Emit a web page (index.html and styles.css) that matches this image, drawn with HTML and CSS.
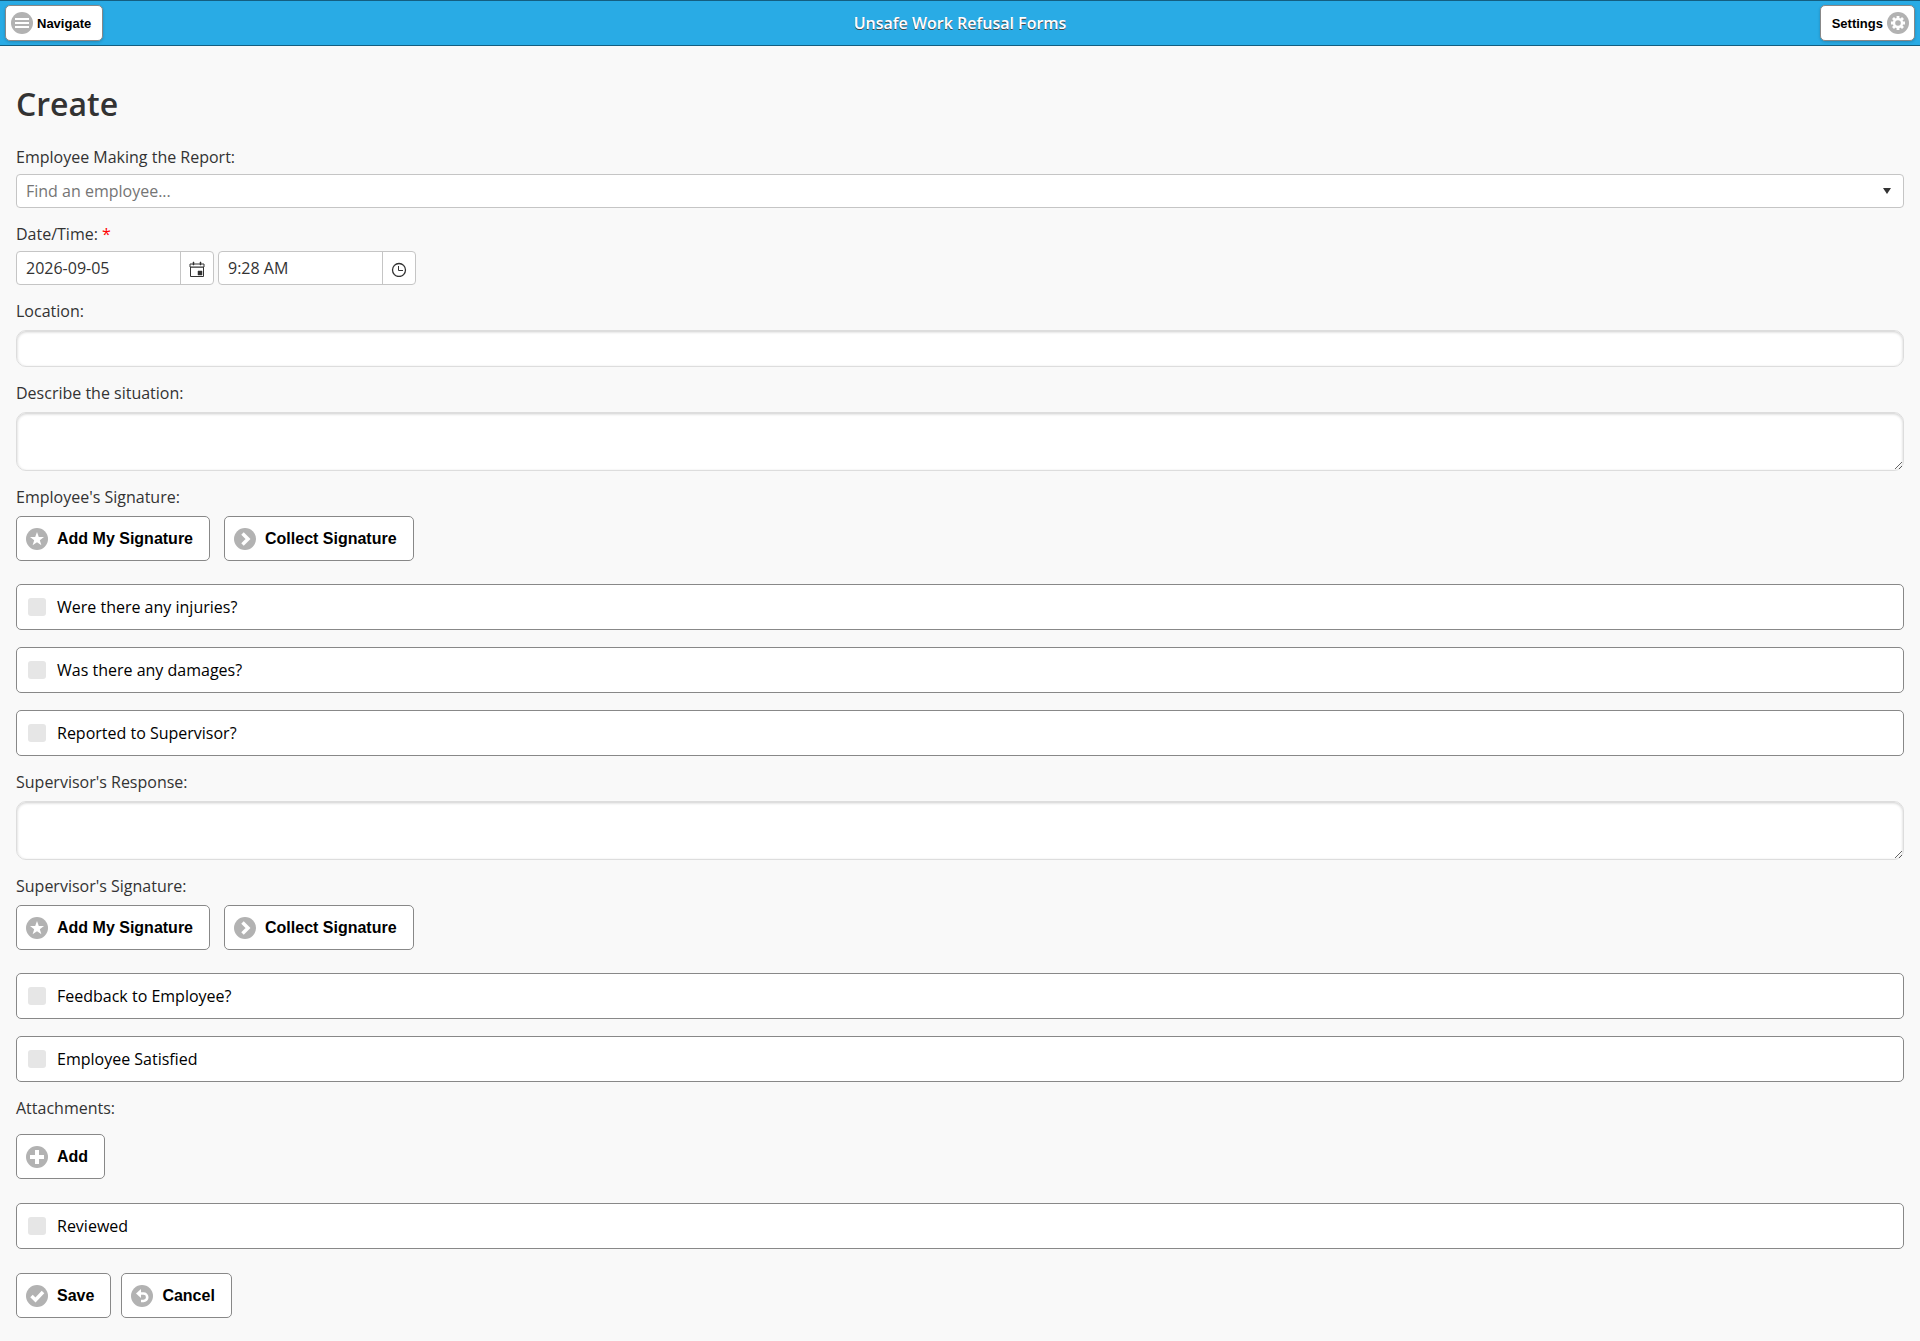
FILE: index.html
```html
<!DOCTYPE html>
<html lang="en">
  <head>
    <meta charset="UTF-8" />
    <meta name="viewport" content="width=device-width, initial-scale=1.0" />
    <title>Unsafe Work Refusal Forms</title>
    <link rel="stylesheet" href="styles.css">
  </head>
  <body>
    <!-- shared icons -->
    <svg class="sprite" aria-hidden="true">
      <symbol id="icon-bars" viewBox="0 0 22 22">
        <circle cx="11" cy="11" r="11" fill="#b2b2b2" />
        <path d="M4 7h14M4 11h14M4 15h14" stroke="#fff" stroke-width="2" />
      </symbol>
      <symbol id="icon-gear" viewBox="0 0 22 22">
        <circle cx="11" cy="11" r="11" fill="#b2b2b2" />
        <path d="M11 4v14M4 11h14M6 6l10 10M16 6L6 16" stroke="#fff" stroke-width="2.800" />
        <circle cx="11" cy="11" r="5.200" fill="#fff" />
        <circle cx="11" cy="11" r="2.800" fill="#b2b2b2" />
      </symbol>
      <symbol id="icon-star" viewBox="0 0 22 22">
        <circle cx="11" cy="11" r="11" fill="#b2b2b2" />
        <path d="M11 4l1.800 5H18l-4.200 3.200 1.600 5L11 14.200l-4.400 3 1.600-5L4 9h5.200z" fill="#fff" />
      </symbol>
      <symbol id="icon-arrow" viewBox="0 0 22 22">
        <circle cx="11" cy="11" r="11" fill="#b2b2b2" />
        <path d="M8.500 5.500L14 11l-5.500 5.500" fill="none" stroke="#fff" stroke-width="3.500" />
      </symbol>
      <symbol id="icon-plus" viewBox="0 0 22 22">
        <circle cx="11" cy="11" r="11" fill="#b2b2b2" />
        <path d="M11 4v14M4 11h14" stroke="#fff" stroke-width="4" />
      </symbol>
      <symbol id="icon-check" viewBox="0 0 22 22">
        <circle cx="11" cy="11" r="11" fill="#b2b2b2" />
        <path d="M5.500 11l4 4 7.500-8" fill="none" stroke="#fff" stroke-width="3.500" />
      </symbol>
      <symbol id="icon-back" viewBox="0 0 22 22">
        <circle cx="11" cy="11" r="11" fill="#b2b2b2" />
        <path d="M8 8.500h4.500a3.600 3.600 0 0 1 0 7.500H10" fill="none" stroke="#fff" stroke-width="2.600" />
        <path d="M5 8.500l5-4.500v9z" fill="#fff" />
      </symbol>
      <symbol id="icon-calendar" viewBox="0 0 16 16">
        <path d="M1.500 3.500h13v12h-13zM1.500 6h13M4.500 1v3M11.500 1v3" fill="none" stroke="#333" />
        <path d="M1 3h14v3H1z" fill="#fff" stroke="#333" />
        <path d="M4 1h1v3H4zM11 1h1v3h-1zM9 10h4v4H9z" fill="#333" stroke="#333" stroke-width=".5" />
      </symbol>
      <symbol id="icon-clock" viewBox="0 0 16 16">
        <circle cx="8" cy="9" r="6.500" fill="none" stroke="#333" stroke-width="1.300" />
        <path d="M7.500 5v4.500H12" fill="none" stroke="#333" />
      </symbol>
    </svg>

    <header class="header">
      <button type="button" class="nav-btn">
        <svg class="icon"><use href="#icon-bars" /></svg>Navigate
      </button>
      <div class="title">Unsafe Work Refusal Forms</div>
      <button type="button" class="nav-btn nav-btn-right">
        Settings<svg class="icon"><use href="#icon-gear" /></svg>
      </button>
    </header>

    <main class="content">
      <h1>Create</h1>
      <form>
        <div class="field field-picker">
          <label for="employee">Employee Making the Report:</label>
          <div class="picker">
            <input type="text" id="employee" placeholder="Find an employee..." autocomplete="off" />
            <button type="button" class="picker-arrow" aria-label="Show employees">
              <svg width="8" height="6"><path d="M0 0h8L4 6z" fill="#333" /></svg>
            </button>
          </div>
        </div>

        <div class="field field-picker">
          <label for="date">Date/Time: <span class="required">*</span></label>
          <div class="date-time">
            <div class="picker picker-small">
              <input type="text" id="date" value="2026-09-05" />
              <button type="button" class="picker-btn" aria-label="Open calendar">
                <svg width="16" height="16"><use href="#icon-calendar" /></svg>
              </button>
            </div>
            <div class="picker picker-small">
              <input type="text" id="time" value="9:28 AM" aria-label="Time" />
              <button type="button" class="picker-btn" aria-label="Open time list">
                <svg width="16" height="16"><use href="#icon-clock" /></svg>
              </button>
            </div>
          </div>
        </div>

        <div class="field">
          <label for="location">Location:</label>
          <input type="text" id="location" class="text-input" />
        </div>

        <div class="field">
          <label for="situation">Describe the situation:</label>
          <textarea id="situation" class="text-input"></textarea>
        </div>

        <div class="field">
          <span class="label">Employee's Signature:</span>
          <div class="buttons signature">
            <button type="button" class="btn"><svg class="icon"><use href="#icon-star" /></svg>Add My Signature</button>
            <button type="button" class="btn"><svg class="icon"><use href="#icon-arrow" /></svg>Collect Signature</button>
          </div>
        </div>

        <div class="checks">
          <label class="check"><input type="checkbox" />Were there any injuries?</label>
          <label class="check"><input type="checkbox" />Was there any damages?</label>
          <label class="check"><input type="checkbox" />Reported to Supervisor?</label>
        </div>

        <div class="field">
          <label for="response">Supervisor's Response:</label>
          <textarea id="response" class="text-input"></textarea>
        </div>

        <div class="field">
          <span class="label">Supervisor's Signature:</span>
          <div class="buttons signature">
            <button type="button" class="btn"><svg class="icon"><use href="#icon-star" /></svg>Add My Signature</button>
            <button type="button" class="btn"><svg class="icon"><use href="#icon-arrow" /></svg>Collect Signature</button>
          </div>
        </div>

        <div class="checks">
          <label class="check"><input type="checkbox" />Feedback to Employee?</label>
          <label class="check"><input type="checkbox" />Employee Satisfied</label>
        </div>

        <div class="field field-attachments">
          <span class="label">Attachments:</span>
          <div class="buttons">
            <button type="button" class="btn"><svg class="icon"><use href="#icon-plus" /></svg>Add</button>
          </div>
        </div>

        <div class="checks checks-last">
          <label class="check"><input type="checkbox" />Reviewed</label>
        </div>

        <div class="buttons form-actions">
          <button type="submit" class="btn"><svg class="icon"><use href="#icon-check" /></svg>Save</button>
          <button type="button" class="btn"><svg class="icon"><use href="#icon-back" /></svg>Cancel</button>
        </div>
      </form>
    </main>
  </body>
</html>
```
FILE: styles.css
```css
* {
  margin: 0;
  padding: 0;
  box-sizing: border-box;
}
body {
  font-family: "Open Sans", sans-serif;
  font-size: 16px;
  line-height: 22px;
  color: #333;
  background-color: #f9f9f9;
}
.sprite {
  display: none;
}
.icon {
  width: 22px;
  height: 22px;
  flex-shrink: 0;
}
button {
  cursor: pointer;
}

/* header */
.header {
  display: grid;
  grid-template-columns: 1fr auto 1fr;
  align-items: center;
  height: 46px;
  padding: 0 5px;
  background-color: #29abe5;
  border-top: 1px solid #145e80;
  border-bottom: 1px solid #145e80;
}
.title {
  font-weight: 600;
  color: #fff;
  text-shadow: 0 1px 0 #444;
}
.nav-btn {
  display: flex;
  align-items: center;
  justify-self: start;
  gap: 4px;
  height: 36px;
  padding: 0 11px 0 5px;
  font: bold 13px "Liberation Sans", sans-serif;
  color: #000;
  background-color: #fff;
  border: 1px solid #888;
  border-radius: 5px;
  box-shadow: 0 1px 3px rgba(0, 0, 0, 0.2);
}
.nav-btn-right {
  justify-self: end;
  padding: 0 5px 0 11px;
}

/* form */
.content {
  padding: 36px 16px 0;
}
h1 {
  font-size: 32px;
  font-weight: 600;
  line-height: 44px;
  margin-bottom: 20px;
}
.field {
  margin-bottom: 15px;
}
.field > label,
.label {
  display: block;
  margin-bottom: 8px;
}
.field-picker > label {
  margin-bottom: 6px;
}
.field-attachments .label {
  margin-bottom: 15px;
}
.required {
  color: #f00;
}
.picker {
  display: flex;
  height: 34px;
  background-color: #fff;
  border: 1px solid #c5c5c5;
  border-radius: 4px;
  overflow: hidden;
}
.picker input {
  flex: 1;
  min-width: 0;
  padding: 0 9px;
  font: inherit;
  color: #333;
  background: none;
  border: none;
}
.picker input::placeholder {
  color: #757575;
}
.picker button {
  display: flex;
  align-items: center;
  justify-content: center;
  width: 33px;
  background: none;
  border: none;
}
.picker .picker-btn {
  border-left: 1px solid #c5c5c5;
  padding-top: 2px;
}
.picker-small {
  width: 198px;
}
.date-time {
  display: flex;
  gap: 4px;
}
.text-input {
  display: block;
  width: 100%;
  height: 37px;
  padding: 6px;
  font: inherit;
  color: #333;
  background-color: #fff;
  border: 1px solid #ddd;
  border-radius: 10px;
  box-shadow: inset 0 1px 3px rgba(0, 0, 0, 0.2);
}
textarea.text-input {
  height: 59px;
  resize: vertical;
}
.buttons {
  display: flex;
  gap: 10px;
  margin-bottom: 24px;
}
.signature {
  gap: 14px;
  margin-bottom: 23px;
}
.form-actions {
  margin-bottom: 16px;
}
.btn {
  display: flex;
  align-items: center;
  gap: 9px;
  height: 45px;
  padding: 0 16px 0 9px;
  font: bold 16px "Liberation Sans", sans-serif;
  color: #000;
  background-color: #fff;
  border: 1px solid #888;
  border-radius: 5px;
}
.checks {
  display: grid;
  gap: 17px;
  margin-bottom: 15px;
}
.checks-last {
  margin-bottom: 24px;
}
.check {
  display: flex;
  align-items: center;
  gap: 11px;
  height: 46px;
  padding: 0 11px;
  color: #000;
  background-color: #fff;
  border: 1px solid #888;
  border-radius: 5px;
  cursor: pointer;
}
.check input {
  appearance: none;
  width: 18px;
  height: 18px;
  background-color: #e6e6e6;
  border-radius: 3px;
}
.check input:checked {
  background-color: #29abe5;
}
```
